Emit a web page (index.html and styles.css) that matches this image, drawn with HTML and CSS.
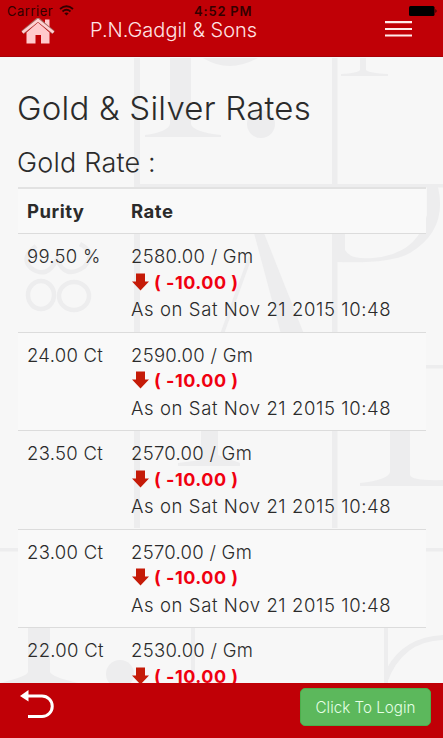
FILE: index.html
```html
<!DOCTYPE html>
<html lang="en">
<head>
<meta charset="utf-8">
<title>Gold &amp; Silver Rates</title>
<link rel="stylesheet" href="styles.css">
</head>
<body>
<div class="app">
  <header class="topbar">
    <div class="status">
      <span class="carrier">Carrier</span>
      <svg class="wifi" width="15" height="11" viewBox="0 0 15 11"><g fill="none" stroke="#300" stroke-width="1.9"><path d="M1 4Q7.500-1.300 14 4"/><path d="M3.500 6.500Q7.500 3.200 11.500 6.500"/></g><path d="M5.300 8.200Q7.500 6.600 9.700 8.200L7.500 10.500Z" fill="#300"/></svg>
      <span class="clock">4:52 PM</span>
      <svg class="battery" width="29" height="10" viewBox="0 0 29 10"><rect width="25.500" height="10" rx="1.500"/><path d="M26.500 3Q28.500 5 26.500 7Z"/></svg>
    </div>
    <nav class="nav">
      <svg class="home" width="34" height="26" viewBox="0 0 34 26"><path d="M5.500 14.500 17 4.500 28.500 14.500V25.500H20V17H14.500V25.500H5.500Z" fill="#ffc9cc"/><path d="M24 1.500H28.500V9H24Z" fill="#ffc9cc"/><path d="M1.500 14.500 17 1.500 32.500 14.500" fill="none" stroke="#a56d64" stroke-width="4"/><path d="M1.500 14.500 17 2.200 32.500 14.500" fill="none" stroke="#ffd0d2" stroke-width="2.600"/></svg>
      <span class="brand">P.N.Gadgil &amp; Sons</span>
      <svg class="menu" width="27" height="16" viewBox="0 0 27 16"><path d="M0 1.200H27M0 8H27M0 14.500H27" stroke="#ffeceb" stroke-width="2.200"/></svg>
    </nav>
  </header>
  <main class="content">
    <svg class="watermark" width="443" height="625" viewBox="0 58 443 625">
      <path d="M134 58H140V528H134ZM332 58H337.500V528H332ZM140 184H443V187.500H140ZM426 365H443V368.500H426ZM0 548H18V551.500H0ZM426 548H443V551.500H426ZM191 627H195V683H191ZM384 627H388V683H384Z"/>
      <path d="M170 58H191V124Q193 132 221 135V137H145V135Q168 132 170 124Z"/>
      <path d="M203 58H258Q229 74 203 58Z"/><circle cx="261" cy="124" r="14"/>
      <path d="M360 58H366V70Q369 73 388 74V76H341V74Q358 73 360 70Z"/>
      <path d="M337 187H345V250Q350 260 373 258Q418 254 427 215V187H438Q448 230 410 253Q390 264 337 262Z"/>
      <path d="M254 233H264L304 334H281Z"/><path d="M251 260 224 334H220L249 255Z"/>
      <path d="M201 430H218V455L240 463V466H178V463L201 460Z"/>
      <path d="M390 430H410V475Q412 481 443 480V486H360V483Q388 480 390 472Z"/>
      <path d="M28 627H50V672Q52 677 78 683H0Q28 676 28 672Z"/><circle cx="120" cy="674" r="14"/>
      <path d="M443 635Q404 637 387 668V683Q402 641 443 640Z"/>
      <g class="numerals"><ellipse cx="41" cy="295" rx="13" ry="14"/><ellipse cx="74" cy="296" rx="15" ry="14"/><path d="M36 246Q20 258 31 268Q47 280 57 259Q65 280 84 267Q97 253 80 244"/></g>
    </svg>
    <h1 class="title">Gold &amp; Silver Rates</h1>
    <h2 class="subtitle">Gold Rate :</h2>
    <div class="rates">
      <div class="row head"><span>Purity</span><span>Rate</span></div>
      <div class="row"><span class="purity">99.50 %</span><div><p class="price">2580.00 / Gm</p><p class="change"><svg class="down" width="17" height="18" viewBox="0 0 17 18"><path d="M4 .500H13V8.500H17L8.500 17.500 0 8.500H4Z"/></svg>( -10.00 )</p><p class="date">As on Sat Nov 21 2015 10:48</p></div></div>
      <div class="row striped"><span class="purity">24.00 Ct</span><div><p class="price">2590.00 / Gm</p><p class="change"><svg class="down" width="17" height="18" viewBox="0 0 17 18"><path d="M4 .500H13V8.500H17L8.500 17.500 0 8.500H4Z"/></svg>( -10.00 )</p><p class="date">As on Sat Nov 21 2015 10:48</p></div></div>
      <div class="row"><span class="purity">23.50 Ct</span><div><p class="price">2570.00 / Gm</p><p class="change"><svg class="down" width="17" height="18" viewBox="0 0 17 18"><path d="M4 .500H13V8.500H17L8.500 17.500 0 8.500H4Z"/></svg>( -10.00 )</p><p class="date">As on Sat Nov 21 2015 10:48</p></div></div>
      <div class="row striped"><span class="purity">23.00 Ct</span><div><p class="price">2570.00 / Gm</p><p class="change"><svg class="down" width="17" height="18" viewBox="0 0 17 18"><path d="M4 .500H13V8.500H17L8.500 17.500 0 8.500H4Z"/></svg>( -10.00 )</p><p class="date">As on Sat Nov 21 2015 10:48</p></div></div>
      <div class="row"><span class="purity">22.00 Ct</span><div><p class="price">2530.00 / Gm</p><p class="change"><svg class="down" width="17" height="18" viewBox="0 0 17 18"><path d="M4 .500H13V8.500H17L8.500 17.500 0 8.500H4Z"/></svg>( -10.00 )</p></div></div>
    </div>
  </main>
  <footer class="bottombar">
    <svg class="back" width="34" height="30" viewBox="0 0 34 30"><path d="M7 6H22A9.800 9.800 0 0 1 22 26.500H8" fill="none" stroke="#fff" stroke-width="3"/><path d="M0 6 8.500 0V11.500Z" fill="#fff"/></svg>
    <button class="login">Click To Login</button>
  </footer>
</div>
</body>
</html>
```
FILE: styles.css
```css
* { box-sizing: border-box; }
body { margin: 0; font-family: Inter, "Liberation Sans", sans-serif; font-weight: 300; color: #2b2b2b; }
.app { width: 443px; height: 738px; display: flex; flex-direction: column; overflow: hidden; background: #f7f7f7; }
.topbar { height: 57px; flex: none; background: #c00006; border-bottom: 1px solid #a90008; }
.status { height: 17px; padding: 5px 5px 0 7px; display: flex; align-items: center; color: #300; font-size: 13px; line-height: 13px; }
.carrier { width: 46px; font-weight: 400; letter-spacing: .5px; }
.wifi { margin-left: 6px; margin-top: -1px; }
.clock { margin-left: 120px; width: 60px; font-weight: 600; letter-spacing: .8px; white-space: nowrap; }
.battery { margin-left: auto; fill: #000; }
.nav { height: 26px; padding: 0 31px 0 21px; display: flex; align-items: center; }
.home { flex: none; margin-top: 1px; }
.brand { margin-left: 35px; color: #ffe4e4; font-size: 20px; line-height: 24px; white-space: nowrap; }
.menu { margin-left: auto; margin-top: -2px; }
.content { position: relative; z-index: 0; height: 626px; flex: none; padding: 0 17px 0 18px; overflow: hidden; }
.watermark { position: absolute; left: 0; top: 1px; z-index: -1; fill: #ededee; }
.numerals { fill: none; stroke: #ededee; stroke-width: 4.5; }
.title { margin: 31px 0 0 -1px; height: 40px; font-size: 33px; line-height: 40px; font-weight: 300; letter-spacing: .22px; white-space: nowrap; }
.subtitle { margin: 18px 0 0 -1px; height: 33px; font-size: 27px; line-height: 33px; font-weight: 300; letter-spacing: .2px; white-space: nowrap; }
.rates { margin-top: 8px; }
.row { display: grid; grid-template-columns: 104px 1fr; height: 98.500px; padding: 9px 9px 0; border-top: 1px solid #dcdcdc; font-size: 18.5px; letter-spacing: .28px; line-height: 26.500px; white-space: nowrap; }
.row p { margin: 0; height: 26.500px; }
.date { letter-spacing: .6px; }
.head { height: 46px; font-weight: 700; letter-spacing: .5px; border-top: 2px solid #e2e2e2; background: #f9f9f9; }
.striped { background: #f9f9f9; }
.row .change { color: #f00010; font-size: 18px; font-weight: 700; letter-spacing: .5px; display: flex; align-items: center; }
.down { margin: -2px 5px 0 1px; fill: #c51b08; }
.bottombar { height: 55px; flex: none; background: #c00006; padding: 5px 12px 0 20px; display: flex; align-items: flex-start; justify-content: space-between; }
.back { margin-top: 2px; }
.login { width: 131px; height: 38px; padding: 0; border: 1px solid #4cae4c; border-radius: 5px; background: #5cb85c; color: #e5ffe5; font: 300 15.2px Inter, sans-serif; white-space: nowrap; }
```
